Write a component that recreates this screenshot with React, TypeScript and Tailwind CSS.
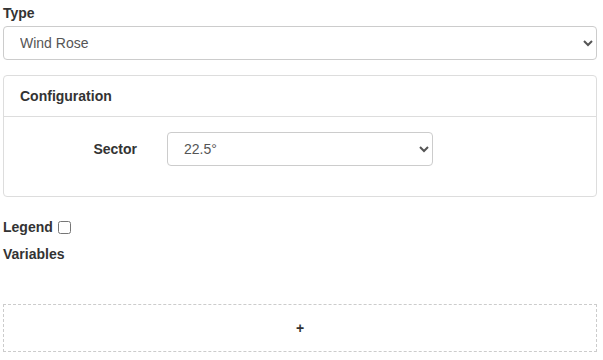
export default function App() {
  return (
    <div className="min-h-[360px] bg-white pl-[3px] pr-[6px] pt-[3px] text-[14px] leading-[20px] text-[#333] font-['Liberation_Sans',Arial,sans-serif]">
      <label className="mb-[3px] block font-bold">Type</label>
      <select
        defaultValue="windrose"
        className="block h-[34px] w-full rounded-[4px] border border-[#ccc] bg-white px-[12px] text-[14px] text-[#555]"
      >
        <option value="windrose">Wind Rose</option>
        <option value="line">Line</option>
      </select>

      <div className="mt-[15px] mb-[20px] rounded-[4px] border border-[#ddd]">
        <div className="border-b border-[#ddd] px-[16px] py-[10px] font-bold">Configuration</div>
        <div className="pt-[15px] pb-[15px]">
          <div className="mb-[15px] flex items-center">
            <label className="w-1/4 pr-[15px] text-right font-bold">Sector</label>
            <div className="w-1/2 px-[15px]">
              <select
                defaultValue="22.5"
                className="block h-[34px] w-full rounded-[4px] border border-[#ccc] bg-white px-[12px] text-[14px] text-[#555]"
              >
                <option value="22.5">22.5°</option>
                <option value="45">45°</option>
              </select>
            </div>
          </div>
        </div>
      </div>

      <label className="flex items-center font-bold">
        Legend
        <input type="checkbox" className="ml-[5px] h-[13px] w-[13px]" />
      </label>
      <div className="mt-[7px] font-bold">Variables</div>

      <div className="mt-[40px] flex h-[48px] items-center justify-center border border-dashed border-[#ccc] pb-[1px] font-bold">
        +
      </div>
    </div>
  );
}
